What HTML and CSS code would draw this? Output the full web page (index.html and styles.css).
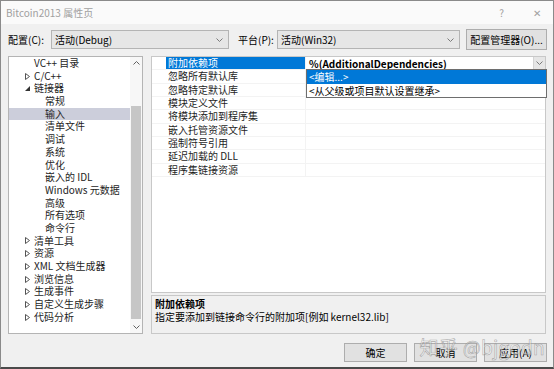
FILE: index.html
```html
<!DOCTYPE html>
<html lang="zh-CN">
<head>
<meta charset="utf-8">
<title>Bitcoin2013 属性页</title>
<link rel="stylesheet" href="styles.css">
</head>
<body>
<div class="window">
  <div class="titlebar">
    <span class="title">Bitcoin2013 属性页</span>
    <span class="tb-btn help">?</span>
    <span class="tb-btn close">✕</span>
  </div>
  <div class="content">
    <div class="toolbar">
      <span class="lbl lbl-config">配置(C):</span>
      <div class="combo combo-config"><span>活动(Debug)</span><svg class="chev" width="7" height="4" viewBox="0 0 7 4"><polyline points="0.5,0.5 3.5,3.5 6.5,0.5" fill="none" stroke="#7a7a7a" stroke-width="1"/></svg></div>
      <span class="lbl lbl-platform">平台(P):</span>
      <div class="combo combo-platform"><span>活动(Win32)</span><svg class="chev" width="7" height="4" viewBox="0 0 7 4"><polyline points="0.5,0.5 3.5,3.5 6.5,0.5" fill="none" stroke="#7a7a7a" stroke-width="1"/></svg></div>
      <div class="btn btn-mgr">配置管理器(O)...</div>
    </div>
    <div class="main">
      <div class="tree">
        <div class="tree-list">
          <div class="item l1"><span class="tog"></span>VC++ 目录</div>
          <div class="item l1"><span class="tog"><svg width="5" height="7" viewBox="0 0 5 7"><polygon points="0.5,0.5 4.5,3.5 0.5,6.5" fill="none" stroke="#555" stroke-width="1"/></svg></span>C/C++</div>
          <div class="item l1"><span class="tog"><svg width="5" height="5" viewBox="0 0 5 5"><polygon points="5,0 5,5 0,5" fill="#333"/></svg></span>链接器</div>
          <div class="item l2">常规</div>
          <div class="item l2 sel">输入</div>
          <div class="item l2">清单文件</div>
          <div class="item l2">调试</div>
          <div class="item l2">系统</div>
          <div class="item l2">优化</div>
          <div class="item l2">嵌入的 IDL</div>
          <div class="item l2">Windows 元数据</div>
          <div class="item l2">高级</div>
          <div class="item l2">所有选项</div>
          <div class="item l2">命令行</div>
          <div class="item l1"><span class="tog"><svg width="5" height="7" viewBox="0 0 5 7"><polygon points="0.5,0.5 4.5,3.5 0.5,6.5" fill="none" stroke="#555" stroke-width="1"/></svg></span>清单工具</div>
          <div class="item l1"><span class="tog"><svg width="5" height="7" viewBox="0 0 5 7"><polygon points="0.5,0.5 4.5,3.5 0.5,6.5" fill="none" stroke="#555" stroke-width="1"/></svg></span>资源</div>
          <div class="item l1"><span class="tog"><svg width="5" height="7" viewBox="0 0 5 7"><polygon points="0.5,0.5 4.5,3.5 0.5,6.5" fill="none" stroke="#555" stroke-width="1"/></svg></span>XML 文档生成器</div>
          <div class="item l1"><span class="tog"><svg width="5" height="7" viewBox="0 0 5 7"><polygon points="0.5,0.5 4.5,3.5 0.5,6.5" fill="none" stroke="#555" stroke-width="1"/></svg></span>浏览信息</div>
          <div class="item l1"><span class="tog"><svg width="5" height="7" viewBox="0 0 5 7"><polygon points="0.5,0.5 4.5,3.5 0.5,6.5" fill="none" stroke="#555" stroke-width="1"/></svg></span>生成事件</div>
          <div class="item l1"><span class="tog"><svg width="5" height="7" viewBox="0 0 5 7"><polygon points="0.5,0.5 4.5,3.5 0.5,6.5" fill="none" stroke="#555" stroke-width="1"/></svg></span>自定义生成步骤</div>
          <div class="item l1"><span class="tog"><svg width="5" height="7" viewBox="0 0 5 7"><polygon points="0.5,0.5 4.5,3.5 0.5,6.5" fill="none" stroke="#555" stroke-width="1"/></svg></span>代码分析</div>
        </div>
        <div class="vscroll">
          <svg class="arrow" width="7" height="4" viewBox="0 0 7 4"><polyline points="0.5,3.5 3.5,0.5 6.5,3.5" fill="none" stroke="#606060" stroke-width="1"/></svg>
          <div class="track"><div class="thumb"></div></div>
          <svg class="arrow" width="7" height="4" viewBox="0 0 7 4"><polyline points="0.5,0.5 3.5,3.5 6.5,0.5" fill="none" stroke="#606060" stroke-width="1"/></svg>
        </div>
      </div>
      <div class="right">
        <div class="grid">
          <div class="row">
            <div class="gutter"></div>
            <div class="name sel-name">附加依赖项</div>
            <div class="value editing"><span class="val-text">%(AdditionalDependencies)</span><span class="dd-btn"><svg width="7" height="4" viewBox="0 0 7 4"><polyline points="0.5,0.5 3.5,3.5 6.5,0.5" fill="none" stroke="#7a7a7a" stroke-width="1"/></svg></span></div>
          </div>
          <div class="row"><div class="gutter"></div><div class="name">忽略所有默认库</div><div class="value"></div></div>
          <div class="row"><div class="gutter"></div><div class="name">忽略特定默认库</div><div class="value"></div></div>
          <div class="row"><div class="gutter"></div><div class="name">模块定义文件</div><div class="value"></div></div>
          <div class="row"><div class="gutter"></div><div class="name">将模块添加到程序集</div><div class="value"></div></div>
          <div class="row"><div class="gutter"></div><div class="name">嵌入托管资源文件</div><div class="value"></div></div>
          <div class="row"><div class="gutter"></div><div class="name">强制符号引用</div><div class="value"></div></div>
          <div class="row"><div class="gutter"></div><div class="name">延迟加载的 DLL</div><div class="value"></div></div>
          <div class="row"><div class="gutter"></div><div class="name">程序集链接资源</div><div class="value"></div></div>
          <div class="dropdown">
            <div class="dd-item dd-sel">&lt;编辑...&gt;</div>
            <div class="dd-item">&lt;从父级或项目默认设置继承&gt;</div>
          </div>
        </div>
        <div class="desc">
          <div class="desc-title">附加依赖项</div>
          <div class="desc-text">指定要添加到链接命令行的附加项[例如 kernel32.lib]</div>
        </div>
      </div>
    </div>
    <div class="footer">
      <div class="btn btn-foot">确定</div>
      <div class="btn btn-foot">取消</div>
      <div class="btn btn-foot">应用(A)</div>
    </div>
  </div>
  <div class="watermark">知乎 @bjgodn</div>
</div>
</body>
</html>
```
FILE: styles.css
```css
* { box-sizing: border-box; }
html, body { margin: 0; padding: 0; }
body {
  width: 554px;
  height: 369px;
  overflow: hidden;
  font-family: "Noto Sans CJK SC", "Noto Sans", sans-serif;
  font-size: 10px;
  color: #000;
  background: #f0f0f0;
}
.window {
  position: relative;
  width: 554px;
  height: 369px;
  border: 1px solid #8a8a8a;
  border-bottom: 2px solid #4a4a4a;
  background: #f0f0f0;
  display: flex;
  flex-direction: column;
}
.titlebar {
  height: 23px;
  background: #fafafa;
  display: flex;
  align-items: center;
  padding-left: 5px;
  color: #a0a0a0;
}
.title { flex: 1; }
.tb-btn { color: #a0a0a0; font-size: 10px; }
.help { margin-right: 29px; }
.close { margin-right: 12px; font-size: 10px; }
.content {
  padding: 0 6px 0 7px;
  display: flex;
  flex-direction: column;
}
.toolbar {
  margin-top: 5px;
  height: 21px;
  display: flex;
  align-items: center;
}
.lbl-config { width: 43px; }
.lbl-platform { width: 39px; margin-left: 9px; }
.combo {
  height: 19px;
  border: 1px solid #b4b4b4;
  background: #e6e6e6;
  display: flex;
  align-items: center;
  padding: 0 5px 0 3px;
}
.combo span { flex: 1; }
.combo-config { width: 178px; }
.combo-platform { width: 183px; }
.btn {
  background: #e1e1e1;
  border: 1px solid #adadad;
  display: flex;
  align-items: center;
  justify-content: center;
}
.btn-mgr { width: 81px; height: 21px; margin-left: 6px; }
.main {
  margin-top: 6px;
  height: 278px;
  display: flex;
  gap: 8px;
  margin-right: 1px;
}
.tree {
  width: 135px;
  border: 1px solid #b4b4b4;
  background: #fff;
  display: flex;
}
.tree-list { flex: 1; padding-top: 0; }
.item {
  height: 12.7px;
  line-height: 12.7px;
  display: flex;
  align-items: center;
  color: #1e1e1e;
  white-space: nowrap;
}
.l1 { padding-left: 16px; }
.l2 { padding-left: 36px; }
.tog { width: 9px; display: flex; align-items: center; }
.sel { background: #cccedb; }
.vscroll {
  width: 12px;
  display: flex;
  flex-direction: column;
  align-items: center;
  background: #f7f7f7;
  padding: 4px 0 4px;
}
.arrow { flex: none; }
.track { flex: 1; width: 100%; padding: 41px 1px 6px 1px; }
.thumb { height: 100%; background: #c6c6c6; }
.right {
  flex: 1;
  display: flex;
  flex-direction: column;
  gap: 2px;
}
.grid {
  position: relative;
  height: 237px;
  border: 1px solid #c8c8c8;
  background: #fff;
}
.row {
  height: 13.33px;
  display: flex;
  border-bottom: 1px solid #f3f3f3;
}
.gutter { width: 14px; }
.name {
  width: 140px;
  padding-left: 2px;
  line-height: 12.33px;
  color: #1e1e1e;
  border-right: 1px solid #f3f3f3;
}
.sel-name { background: #0078d7; color: #fff; }
.value { flex: 1; display: flex; align-items: center; }
.editing { padding-left: 3px; }
.val-text { flex: 1; font-weight: bold; }
.dd-btn {
  width: 12px;
  height: 100%;
  background: #e6e6e6;
  border-left: 1px solid #d4d4d4;
  display: flex;
  align-items: center;
  justify-content: center;
}
.dropdown {
  position: absolute;
  left: 154px;
  top: 12px;
  width: 241px;
  border: 1px solid #6e6e6e;
  background: #fff;
}
.dd-item {
  height: 13.5px;
  line-height: 13.5px;
  padding-left: 2px;
}
.dd-sel { background: #0078d7; color: #fff; }
.desc {
  flex: 1;
  border: 1px solid #c8c8c8;
  background: #f0f0f0;
  padding: 1px 3px;
  line-height: 13px;
}
.desc-title { font-weight: bold; }
.footer {
  margin-top: 9px;
  display: flex;
  justify-content: flex-end;
  gap: 7px;
}
.btn-foot { width: 63px; height: 19px; }
.watermark {
  position: absolute;
  right: 8px;
  bottom: 9px;
  font-size: 19px;
  line-height: 22px;
  color: rgba(255, 255, 255, 0.45);
  -webkit-text-stroke: 0.6px rgba(110, 110, 110, 0.55);
  letter-spacing: 0.3px;
  white-space: nowrap;
}
```
